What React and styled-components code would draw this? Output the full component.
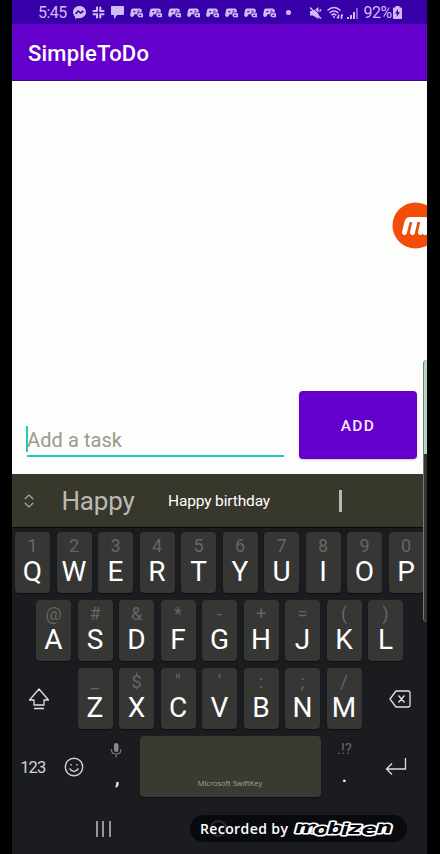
import React from "react";
import styled, { createGlobalStyle } from "styled-components";

const Global = createGlobalStyle`
  * { box-sizing: border-box; }
  body { margin: 0; background: #000; font-family: Roboto, "Liberation Sans", sans-serif; }
  svg { display: block; flex: none; }
`;

const Stage = styled.div`
  width: 440px; height: 854px; background: #000; padding: 0 13px 0 12px; overflow: hidden;
`;
const Phone = styled.div`
  position: relative; height: 854px; display: flex; flex-direction: column; overflow: hidden;
`;
const StatusBar = styled.div`
  height: 24px; flex: none; display: flex; align-items: center; background: #3800a8; color: #d0bcf4;
  padding: 1px 25px 0 26px; font-size: 16px;
`;
const Clock = styled.span`width: 35px; letter-spacing: -0.5px;`;
const Notices = styled.div`display: flex; gap: 6px; align-items: center; flex: 1;`;
const Dot = styled.i`width: 5px; height: 5px; border-radius: 50%; background: #d0bcf4; margin-left: 4px;`;
const System = styled.div`display: flex; gap: 4.5px; align-items: center;`;
const Battery = styled.span`letter-spacing: -0.5px; width: 28px; white-space: nowrap; margin-right: -3px;`;
const AppBar = styled.header`
  height: 57px; flex: none; background: #6300cc; color: #fff; display: flex; align-items: center;
  padding: 2px 0 0 16px; border-bottom: 1px solid #3b0b77;
`;
const Title = styled.h1`margin: 0; font-size: 22px; font-weight: 500; letter-spacing: 0.2px;`;
const Content = styled.main`
  height: 393px; flex: none; background: #fdfdfb; display: flex; align-items: flex-end; padding: 0 10px 15px 15px;
`;
const Field = styled.div`
  width: 257px; height: 32px; border-bottom: 2px solid #1cc9bd; position: relative; margin-bottom: 2px;
  font-size: 20px; line-height: 31px; color: #99998f; letter-spacing: 0.08px;
`;
const Caret = styled.i`position: absolute; left: -1px; top: 1px; width: 2px; height: 26px; background: #24c9b7;`;
const AddButton = styled.button`
  margin: 0 0 0 auto; width: 118px; height: 68px; border: 0; border-radius: 4px; background: #6300cc; color: #f5eaff;
  font: 500 15.5px Roboto, sans-serif; letter-spacing: 1.4px; box-shadow: 0 1px 2px #0003; padding: 1px 0 0;
`;
const Suggestions = styled.div`
  height: 53px; flex: none; background: #37372c; color: #fff; display: grid; align-items: center;
  grid-template-columns: 34px 104px 138px 105px; padding-top: 1px;
`;
const Current = styled.span`font-size: 26px; color: #b9b9b4; text-align: center; letter-spacing: -0.2px;`;
const Suggestion = styled.span`font-size: 15.5px; text-align: center; letter-spacing: -0.15px;`;
const Divider = styled.i`justify-self: center; width: 3px; height: 22px; background: #b8b8b3;`;
const Keyboard = styled.div`
  height: 327px; flex: none; background: #1a1c20; border-top: 1px solid #07080b; padding-top: 4px;
  display: flex; flex-direction: column; gap: 6.7px;
`;
const Row = styled.div`display: flex; gap: 6.5px; height: 61.3px; flex: none; padding-left: ${(p) => p.$inset}px;`;
const Key = styled.div`
  width: 35px; height: 100%; flex: none; border-radius: 4px; background: #363634; color: #fff;
  box-shadow: 0 1px 1px #0d0e12; display: flex; flex-direction: column; align-items: center;
`;
const Hint = styled.span`height: 27px; line-height: 27px; font-size: 18px; color: #666664;`;
const Letter = styled.span`height: 25px; line-height: 25px; font-size: 28px;`;
const Modifier = styled.div`
  width: ${(p) => p.$w}px; flex: none; display: flex; align-items: center; justify-content: ${(p) => (p.$end ? "flex-end" : "center")};
`;
const BottomRow = styled.div`
  height: 61.3px; flex: none; display: grid; grid-template-columns: 41.5px 41.5px 44.5px 181px 48px 56px;
`;
const Cell = styled.div`display: flex; align-items: center; justify-content: center;`;
const NumberLabel = styled.span`font-size: 16.5px; color: #d5d5d6; letter-spacing: -0.9px; padding-top: 2px;`;
const Stack = styled.div`display: flex; flex-direction: column; align-items: center; padding-top: ${(p) => p.$top}px;`;
const Punctuation = styled.span`font-size: 22px; color: #fff; line-height: 26px; margin-top: ${(p) => p.$gap}px;`;
const SmallHint = styled.span`font-size: 15px; line-height: 19px; color: #666664;`;
const Space = styled.div`
  border-radius: 4px; background: #3a3a32; box-shadow: 0 1px 1px #0d0e12; color: #a3a3a2;
  font: 7.5px/10px "Open Sans", sans-serif; display: flex; align-items: flex-end; justify-content: center; padding-bottom: 9px;
`;
const NavBar = styled.nav`
  flex: 1; display: grid; grid-template-columns: 182px 49px; align-items: center;
`;
const Recents = styled.div`justify-self: center; display: flex; gap: 4.5px; i { width: 2px; height: 16px; background: #96969a; }`;
const Home = styled.i`justify-self: center; width: 17px; height: 17px; border-radius: 50%; border: 2px solid #aaa;`;
const Bubble = styled.div`position: absolute; left: 380px; top: 202px;`;
const Handle = styled.div`
  position: absolute; left: 411px; top: 360px; width: 8px; height: 262px; border-radius: 4px 0 0 4px;
  background: linear-gradient(#b3d7bd 0 94px, #333331 94px); border-left: 1px solid #777b78;
`;
const Watermark = styled.div`
  position: absolute; left: 178px; top: 815px; width: 217px; height: 27px; border-radius: 14px;
  background: #040508c8; color: #fff; display: flex; align-items: center; padding: 0 0 1px 10px;
  font: 600 14px "Open Sans", sans-serif; letter-spacing: 0.4px; white-space: nowrap;
`;
const Brand = styled.svg`
  margin: 2px 0 0 6px; overflow: visible;
  text {
    font: italic 700 20px "DejaVu Sans", sans-serif; fill: #05060a; stroke: #fff;
    stroke-width: 3.8px; stroke-linejoin: round; paint-order: stroke fill;
  }
`;

const ink = "#d0bcf4";
const Messenger = () => (
  <svg width="13" height="13" viewBox="0 0 13 13"><path fill={ink} d="M6.5 0C2.8 0 0 2.6 0 6.1c0 1.9.8 3.5 2.1 4.6V13l2.1-1.1c.7.2 1.5.3 2.3.3 3.7 0 6.5-2.6 6.5-6.1S10.2 0 6.5 0Z" /><path d="m2.5 8 2.7-3 2.4 2 2.8-2" fill="none" stroke="#3800a8" strokeWidth="1.6" /></svg>
);
const Slack = () => (
  <svg width="13" height="13" viewBox="0 0 13 13" fill="none" stroke={ink} strokeWidth="2.1" strokeLinecap="round"><path d="M5 1.5v3.300M1.500 5h3.300M8.300 1.500V5h3.200M1.500 8.300H5v3.200M8.300 8.300h3.200M8.300 8.500v3" /></svg>
);
const Chat = () => (
  <svg width="13" height="13" viewBox="0 0 13 13"><path fill={ink} d="M1 0h11q1 0 1 1v7q0 1-1 1H6l-3 4V9H1q-1 0-1-1V1q0-1 1-1Z" /></svg>
);
const Gamepad = () => (
  <svg width="13" height="12" viewBox="0 0 13 12">
    <path fill={ink} d="M3 1.500h6.500c1.600 0 2.300 1 2.300 2.500v1.500H7v2L4.800 7 3.300 9.500C1.500 10.500 0 9.500.2 7.500L1 3.500C1.200 2.200 1.800 1.500 3 1.500Z" />
    <path fill={ink} d="M7.500 6.300H13v4H9L7.500 9Z" />
    <path d="M3.300 4.700h2M7.500 4h2M9.300 8.300h1.900" stroke="#3800a8" strokeWidth="1.200" />
  </svg>
);
const Muted = () => (
  <svg width="13" height="14" viewBox="0 0 13 14"><path fill={ink} d="M1 5h3l5.500-4v12L4 9.500H1Z" /><path d="m2.500 0 10.500 11" stroke="#3800a8" strokeWidth="1" /><path d="m1 1.500 11 11M10.500 5.500l1.500-2" stroke={ink} strokeWidth="1.500" /></svg>
);
const Wifi = () => (
  <svg width="16" height="14" viewBox="0 0 16 14" fill="none" stroke={ink} strokeWidth="1.500"><path d="M.5 4.500Q7 -1.500 13.500 4.500M2.500 7Q7 3 11.500 7M4.500 9.200Q7 7 9.300 9.200" /><path d="M7 10v2M11.500 8.500v4M10 11l1.500 1.500M14.500 13V8.500M14.500 8.500 16 10" /></svg>
);
const Signal = () => (
  <svg width="12" height="12" viewBox="0 0 12 12"><path fill={ink} d="M0 10h2v2H0Zm3-2h2v4H3Z" /><path fill={ink} d="M6 5h2v7H6Z" /><path fill="#8061c8" d="M9 1h2v11H9Z" /></svg>
);
const BatteryIcon = () => (
  <svg width="9" height="13" viewBox="0 0 9 13"><path fill={ink} d="M2.500 0h4v1.500H8q1 0 1 1v9.500q0 1-1 1H1q-1 0-1-1V2.500q0-1 1-1h1.500Z" /><path d="M5 3 2 7.500h2L3.600 11 7 6.300H5Z" fill="#3800a8" /></svg>
);

const top = [["1", "Q"], ["2", "W"], ["3", "E"], ["4", "R"], ["5", "T"], ["6", "Y"], ["7", "U"], ["8", "I"], ["9", "O"], ["0", "P"]];
const middle = [["@", "A"], ["#", "S"], ["&", "D"], ["*", "F"], ["-", "G"], ["+", "H"], ["=", "J"], ["(", "K"], [")", "L"]];
const lower = [["_", "Z"], ["$", "X"], ["\"", "C"], ["'", "V"], [":", "B"], [";", "N"], ["/", "M"]];
const Keys = ({ keys }) => keys.map(([h, l]) => <Key key={l}><Hint>{h}</Hint><Letter>{l}</Letter></Key>);

export default function App() {
  return (
    <Stage>
      <Global />
      <Phone>
        <StatusBar>
          <Clock>5:45</Clock>
          <Notices>
            <Messenger /><Slack /><Chat />
            {Array.from({ length: 8 }, (_, i) => <Gamepad key={i} />)}
            <Dot />
          </Notices>
          <System><Muted /><Wifi /><Signal /><Battery>92%</Battery><BatteryIcon /></System>
        </StatusBar>
        <AppBar><Title>SimpleToDo</Title></AppBar>
        <Content>
          <Field><Caret />Add a task</Field>
          <AddButton>ADD</AddButton>
        </Content>
        <Suggestions>
          <Cell><svg width="10" height="14" viewBox="0 0 10 14" fill="none" stroke="#aaa" strokeWidth="1.2"><path d="m.8 5 4.200-4 4.200 4M.8 9 5 13l4.200-4" /></svg></Cell>
          <Current>Happy</Current>
          <Suggestion>Happy birthday</Suggestion>
          <Divider />
        </Suggestions>
        <Keyboard>
          <Row $inset={3}><Keys keys={top} /></Row>
          <Row $inset={24}><Keys keys={middle} /></Row>
          <Row $inset={0}>
            <Modifier $w={59}>
              <svg width="27" height="22" viewBox="0 0 27 22" fill="none" stroke="#e1e1e3" strokeWidth="1.3" strokeLinejoin="round"><path d="M11 1 1.500 12H6v5h10v-5h4.500ZM6 20.500h10" /></svg>
            </Modifier>
            <Keys keys={lower} />
            <Modifier $w={42.5} $end>
              <svg width="22" height="18" viewBox="0 0 22 18" fill="none" stroke="#e1e1e3" strokeWidth="1.300" strokeLinejoin="round"><path d="M7 1h12q2 0 2 2v12q0 2-2 2H7L1 9ZM9.500 5.500 15.500 12.500M15.500 5.500 9.500 12.500" /></svg>
            </Modifier>
          </Row>
          <BottomRow>
            <Cell><NumberLabel>123</NumberLabel></Cell>
            <Cell>
              <svg width="20" height="20" viewBox="0 0 20 20" fill="none" stroke="#d0d0d2" strokeWidth="1.400"><circle cx="10" cy="10" r="8.700" /><path d="M5.500 11.500q4.500 6 9 0M7 7v1.500M13 7v1.500" /></svg>
            </Cell>
            <Stack $top={7}>
              <svg width="14" height="15" viewBox="0 0 14 15"><rect x="4" y="0" width="4.500" height="9" rx="2.200" fill="#88888b" /><path d="M1.500 6v1q0 4 4.700 4t4.700-4V6M6.200 11v3.500" fill="none" stroke="#77777a" strokeWidth="1.200" /></svg>
              <Punctuation $gap={6}>,</Punctuation>
            </Stack>
            <Space>Microsoft SwiftKey</Space>
            <Stack $top={4}>
              <SmallHint>.!?</SmallHint>
              <Punctuation $gap={3}>.</Punctuation>
            </Stack>
            <Cell>
              <svg width="24" height="17" viewBox="0 0 24 17" fill="none" stroke="#dededf" strokeWidth="1.300"><path d="M20.500 0v11H1.500M7 5.500 1.500 11 7 16.500" /></svg>
            </Cell>
          </BottomRow>
          <NavBar><Recents><i /><i /><i /></Recents><Home /></NavBar>
        </Keyboard>
        <Bubble>
          <svg width="47" height="47" viewBox="0 0 47 47"><circle cx="23.500" cy="23.500" r="23" fill="#f34d0b" /><path d="M12.500 30.500 15 20q.8-2.500 3.500-2.500h14q3 0 2.500 3l-2 10M20.500 30.500 23 19M28.500 30.500 31 19" fill="none" stroke="#fff" strokeWidth="5" strokeLinecap="round" strokeLinejoin="round" /></svg>
        </Bubble>
        <Handle />
        <Watermark>
          Recorded by
          <Brand width="102" height="20" viewBox="0 0 102 20" role="img" aria-label="Mobizen">
            <text transform="scale(1.12 0.8)" x="1 17.500 29.500 42 48.500 60.500 73.500" y="17.500 20 18.500 20 18.500 20 17.500">mobizen</text>
          </Brand>
        </Watermark>
      </Phone>
    </Stage>
  );
}
